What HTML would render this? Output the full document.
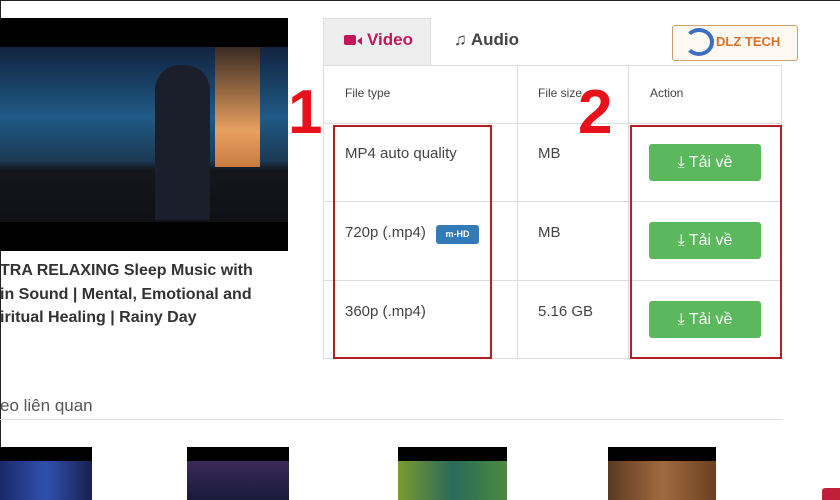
<!DOCTYPE html>
<html><head><meta charset="utf-8"><style>
*{margin:0;padding:0;box-sizing:border-box}
body{width:840px;height:500px;overflow:hidden;background:#fff;font-family:"Liberation Sans",sans-serif;position:relative;color:#333}
.a{position:absolute}
.t{font-size:14px;color:#444}
.btn{position:absolute;left:649px;width:112px;height:37px;background:#5cb85c;border-radius:3px;color:#fff;font-size:16px;line-height:37px;text-align:center}
.red{position:absolute;border:3px solid #b21f24}
.big{position:absolute;color:#e8101a;font-weight:bold;font-size:62px;line-height:1}
</style></head><body>
<div class="a" style="left:0;top:0;width:840px;height:1px;background:#222"></div>
<div class="a" style="left:0;top:0;width:1px;height:500px;background:#222"></div>
<div class="a" style="left:0;top:18px;width:288px;height:233px;background:#000"></div>
<div class="a" style="left:0;top:47px;width:288px;height:175px;background:linear-gradient(180deg,#12233f 0%,#1f5a86 40%,#1c3a55 65%,#15171d 70%,#0e1014 100%)"></div>
<div class="a" style="left:215px;top:47px;width:45px;height:120px;background:linear-gradient(180deg,#3a2a22,#e8a060 70%,#c97a40)"></div>
<div class="a" style="left:155px;top:65px;width:55px;height:155px;border-radius:25px 25px 0 0;background:#1a1f2b"></div>
<div class="a" style="left:0;top:259px;font-weight:bold;font-size:16px;line-height:23.5px;color:#333">TRA RELAXING Sleep Music with<br>in Sound | Mental, Emotional and<br>iritual Healing | Rainy Day</div>
<div class="a" style="left:323px;top:18px;width:108px;height:47px;background:#eee;border:1px solid #ddd;border-bottom:none"></div>
<div class="a" style="left:344px;top:30px;font-size:17px;font-weight:bold;color:#c2185b"><span style="display:inline-block;width:12px;height:10px;background:#c2185b;border-radius:2px;margin-right:1px"></span><span style="display:inline-block;width:0;height:0;border:4px solid transparent;border-right:5px solid #c2185b;border-left:0;margin-right:5px"></span>Video</div>
<div class="a" style="left:454px;top:30px;font-size:17px;font-weight:bold;color:#444">♫ Audio</div>
<div class="a" style="left:672px;top:25px;width:126px;height:36px;border:1px solid #c8a070;border-radius:3px;background:#fdf8f2"></div>
<div class="a" style="left:684px;top:28px;width:30px;height:28px;border-radius:50%;border:4px solid #3a6fc2;border-left-color:transparent"></div>
<div class="a" style="left:716px;top:34px;font-weight:bold;font-size:13px;color:#e07020">DLZ TECH</div>
<div class="a" style="left:323px;top:65px;width:459px;height:294px;border:1px solid #ddd"></div>
<div class="a" style="left:517px;top:65px;width:1px;height:294px;background:#ddd"></div>
<div class="a" style="left:628px;top:65px;width:1px;height:294px;background:#ddd"></div>
<div class="a" style="left:323px;top:123px;width:459px;height:1px;background:#ddd"></div>
<div class="a" style="left:323px;top:201px;width:459px;height:1px;background:#ddd"></div>
<div class="a" style="left:323px;top:280px;width:459px;height:1px;background:#ddd"></div>
<div class="a" style="left:345px;top:86px;font-size:12px;color:#444">File type</div>
<div class="a" style="left:538px;top:86px;font-size:12px;color:#444">File size</div>
<div class="a" style="left:650px;top:86px;font-size:12px;color:#444">Action</div>
<div class="a t" style="left:345px;top:145px;font-size:15px">MP4 auto quality</div>
<div class="a t" style="left:345px;top:224px;font-size:15px">720p (.mp4)</div>
<div class="a" style="left:436px;top:225px;width:43px;height:19px;background:#337ab7;border-radius:3px;color:#fff;font-size:9px;font-weight:bold;text-align:center;line-height:19px">m-HD</div>
<div class="a t" style="left:345px;top:303px;font-size:15px">360p (.mp4)</div>
<div class="a t" style="left:538px;top:145px;font-size:15px">MB</div>
<div class="a t" style="left:538px;top:224px;font-size:15px">MB</div>
<div class="a t" style="left:538px;top:303px;font-size:15px">5.16 GB</div>
<div class="btn" style="top:144px">⤓ Tải về</div>
<div class="btn" style="top:222px">⤓ Tải về</div>
<div class="btn" style="top:301px">⤓ Tải về</div>
<div class="red" style="left:333px;top:125px;width:159px;height:234px;border-width:2.5px"></div>
<div class="red" style="left:630px;top:125px;width:152px;height:234px;border-width:2.5px"></div>
<div class="big" style="left:288px;top:82px">1</div>
<div class="big" style="left:578px;top:82px">2</div>
<div class="a" style="left:0;top:396px;font-size:17px;color:#555">eo liên quan</div>
<div class="a" style="left:0;top:419px;width:782px;height:1px;background:#ddd"></div>
<div class="a" style="left:0;top:447px;width:92px;height:53px;background:#000"><div style="margin-top:14px;height:39px;background:linear-gradient(90deg,#1a2a6a,#3050b0,#1a2050)"></div></div>
<div class="a" style="left:187px;top:447px;width:102px;height:53px;background:#000"><div style="margin-top:14px;height:39px;background:linear-gradient(180deg,#3a2a5a,#1a1a3a)"></div></div>
<div class="a" style="left:398px;top:447px;width:109px;height:53px;background:#000"><div style="margin-top:14px;height:39px;background:linear-gradient(90deg,#7a9a30,#2a6a5a,#4a8a40)"></div></div>
<div class="a" style="left:608px;top:447px;width:108px;height:53px;background:#000"><div style="margin-top:14px;height:39px;background:linear-gradient(90deg,#5a3a20,#a06a40,#6a4020)"></div></div>
<div class="a" style="left:822px;top:488px;width:18px;height:12px;background:#c0203a;border-radius:3px 0 0 0"></div>
</body></html>
